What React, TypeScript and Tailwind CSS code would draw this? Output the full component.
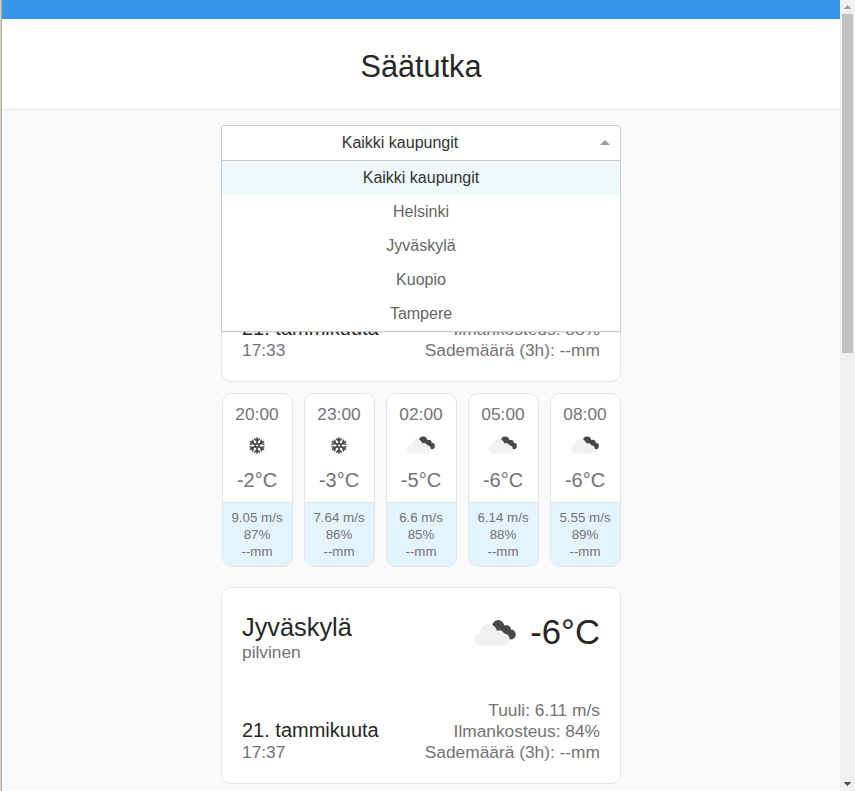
import React from 'react';

function CloudIcon({ className }: { className: string }) {
  return (
    <svg viewBox="0 0 42 26" className={className}>
      <g fill="#484848">
        <circle cx="24.2" cy="6.2" r="6.1" />
        <circle cx="32.6" cy="9.6" r="4.3" />
        <circle cx="36.9" cy="14.5" r="4.9" />
        <path d="M24.2.2 30 5 36 10 39 18 35 19 30 17 27 13 20 8z" />
      </g>
      <circle cx="25.2" cy="15.8" r="5.5" fill="#fff" />
      <g fill="#f1f1f0">
        <circle cx="6.4" cy="19.4" r="6.3" />
        <circle cx="14.6" cy="12.7" r="8.6" />
        <circle cx="25.2" cy="15.8" r="5" />
        <circle cx="29.7" cy="19.6" r="6.1" />
        <rect x="6" y="14" width="24" height="11.7" />
      </g>
    </svg>
  );
}

const arms = [0, 60, 120, 180, 240, 300];

function SnowIcon({ className }: { className: string }) {
  return (
    <svg viewBox="0 0 16 17" className={className}>
      <g stroke="#4c4c4c" strokeWidth="1.7" fill="none" strokeLinecap="round">
        {arms.map((a) => (
          <g key={a} transform={`rotate(${a} 8 8.5)`}>
            <path d="M8 6.8V1M5.7 2 8 4.3 10.3 2" />
          </g>
        ))}
        <circle cx="8" cy="8.5" r="2" strokeWidth="1.3" />
      </g>
    </svg>
  );
}

type City = { name: string; desc: string; temp: string; time: string; wind: string; humidity: string };

function CityCard({ city }: { city: City }) {
  return (
    <section className="flex h-[197px] w-[400px] flex-col justify-between rounded-[10px] border border-[#e5e6e7] bg-white p-5 text-[17.333px] leading-[21px] text-[#737277]">
      <div className="flex justify-between">
        <div className="pt-[4px]">
          <h2 className="text-[25.333px] leading-[30px] text-[#262626]">{city.name}</h2>
          <p>{city.desc}</p>
        </div>
        <div className="flex items-start">
          <CloudIcon className="mt-[12px] mr-[14px] h-[26px] w-[42px]" />
          <span className="pt-[3px] text-[34.667px] leading-[42px] text-[#262626]">{city.temp}</span>
        </div>
      </div>
      <div className="flex items-end justify-between">
        <div>
          <p className="text-[20px] leading-[24px] text-[#262626]">21. tammikuuta</p>
          <p>{city.time}</p>
        </div>
        <div className="text-right">
          <p>Tuuli: {city.wind} m/s</p>
          <p>Ilmankosteus: {city.humidity}</p>
          <p>Sademäärä (3h): --mm</p>
        </div>
      </div>
    </section>
  );
}

const forecasts = [
  { time: '20:00', snow: true, temp: '-2°C', wind: '9.05 m/s', hum: '87%' },
  { time: '23:00', snow: true, temp: '-3°C', wind: '7.64 m/s', hum: '86%' },
  { time: '02:00', snow: false, temp: '-5°C', wind: '6.6 m/s', hum: '85%' },
  { time: '05:00', snow: false, temp: '-6°C', wind: '6.14 m/s', hum: '88%' },
  { time: '08:00', snow: false, temp: '-6°C', wind: '5.55 m/s', hum: '89%' },
];

const options = ['Kaikki kaupungit', 'Helsinki', 'Jyväskylä', 'Kuopio', 'Tampere'];

export default function App() {
  return (
    <div className="flex h-[791px] w-full overflow-hidden bg-[#f8f9fb] font-['Liberation_Sans',Arial,sans-serif]">
      <div className="w-[2px] shrink-0 border-r border-[#b3aca0] bg-[#d6d0c5]" />
      <div className="flex min-w-0 flex-1 flex-col">
        <div className="h-[19px] shrink-0 bg-[#3896e9]" />
        <header className="flex h-[91px] shrink-0 items-center justify-center border-b border-[#e5e6e7] bg-white pt-[4px]">
          <h1 className="text-[30.667px] leading-[36px] text-[#262626]">Säätutka</h1>
        </header>
        <main className="mx-auto w-[400px] pt-[15px]">
          <div className="relative z-10">
            <div className="flex h-[36px] items-center rounded-t-[3px] border border-[#c8c9cb] bg-white text-[16px] text-[#333]">
              <span className="flex-1 pr-[1px] text-center">Kaikki kaupungit</span>
              <span className="flex w-[41px] justify-center pb-[1px] pl-[10px]">
                <svg viewBox="0 0 10 5" className="h-[5px] w-[10px]"><path d="M0 5 5 0 10 5z" fill="#999" /></svg>
              </span>
            </div>
            <ul className="absolute top-[36px] left-0 w-full border-x border-b border-[#c8c9cb] bg-white text-center text-[16px] leading-[34px] text-[#666] shadow-[0_1px_0_rgba(0,0,0,0.06)]">
              {options.map((o, i) => (
                <li key={o} className={i === 0 ? 'bg-[#f1f8fc] text-[#333]' : ''}>{o}</li>
              ))}
            </ul>
          </div>
          <div className="mt-[24px]">
            <CityCard city={{ name: 'Helsinki', desc: 'lumisade', temp: '-2°C', time: '17:33', wind: '8.2', humidity: '88%' }} />
          </div>
          <div className="mt-[11px] flex justify-between pl-[1px]">
            {forecasts.map((f) => (
              <div key={f.time} className="flex h-[174px] w-[71px] flex-col overflow-hidden rounded-[10px] border border-[#e2e4e6] bg-white text-center text-[#737277]">
                <div className="flex flex-1 flex-col items-center pt-[10px] pr-[1px]">
                  <span className="text-[17.333px] leading-[21px]">{f.time}</span>
                  <span className="flex h-[40px] items-center">
                    {f.snow ? <SnowIcon className="h-[17px] w-[16px]" /> : <CloudIcon className="h-[18px] w-[28px]" />}
                  </span>
                  <span className="mt-[3px] text-[20px] leading-[24px]">{f.temp}</span>
                </div>
                <div className="h-[64px] border-t border-[#e2e4e6] bg-[#e3f4fd] pt-[6px] pr-[1px] text-[13.333px] leading-[17px] whitespace-nowrap">
                  <p>{f.wind}</p>
                  <p>{f.hum}</p>
                  <p>--mm</p>
                </div>
              </div>
            ))}
          </div>
          <div className="mt-[20px]">
            <CityCard city={{ name: 'Jyväskylä', desc: 'pilvinen', temp: '-6°C', time: '17:37', wind: '6.11', humidity: '84%' }} />
          </div>
        </main>
      </div>
      <div className="flex w-[15px] shrink-0 flex-col items-center bg-[#f0f0f0]">
        <div className="flex h-[14px] items-center">
          <svg viewBox="0 0 7 4" className="h-[4px] w-[7px]" shapeRendering="crispEdges"><path d="M3 0h1v1h1v1h1v1h1v1H0V3h1V2h1V1h1z" fill="#a3a3a3" /></svg>
        </div>
        <div className="h-[339px] w-[11px] bg-[#c1c1c1]" />
        <svg viewBox="0 0 7 4" className="mt-auto mb-[5px] h-[4px] w-[7px]" shapeRendering="crispEdges"><path d="M0 0h7v1H6v1H5v1H4v1H3V3H2V2H1V1H0z" fill="#505050" /></svg>
      </div>
    </div>
  );
}
